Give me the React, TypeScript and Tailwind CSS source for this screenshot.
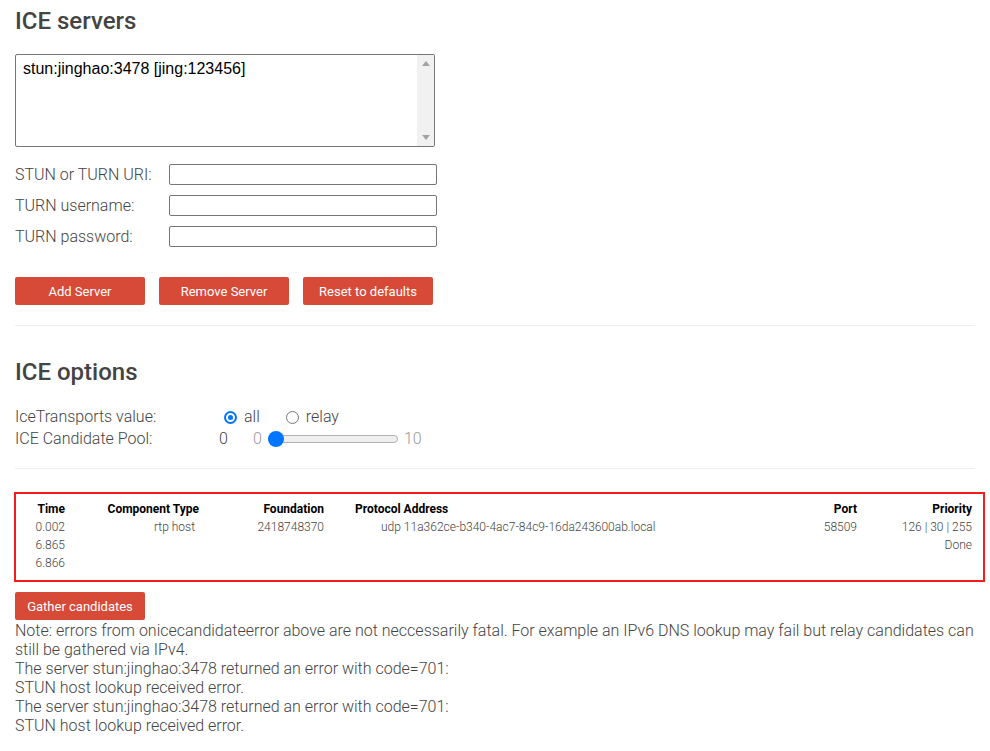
import React from "react";

const rows = [
  ["0.002", "rtp host", "2418748370", "udp 11a362ce-b340-4ac7-84c9-16da243600ab.local", "58509", "126 | 30 | 255"],
  ["6.865", "", "", "", "", "Done"],
  ["6.866", "", "", "", "", ""],
];

function Btn({ children }: { children: React.ReactNode }) {
  return (
    <button className="w-[130px] h-[28px] bg-[#d84a38] rounded-[2px] text-white text-[13px] font-normal leading-none">
      {children}
    </button>
  );
}

export default function App() {
  return (
    <div
      className="w-[990px] min-h-[751px] bg-white text-[#444] font-light text-[16px]"
      style={{ fontFamily: "Roboto, 'Liberation Sans', sans-serif" }}
    >
      <div className="w-[960px] ml-[15px]">
        <h2 className="pt-[5px] text-[24px] leading-[32px] font-medium text-[#444]">ICE servers</h2>

        <div className="mt-[17px] w-[420px] h-[93px] border border-[#767676] rounded-[2px] flex overflow-hidden">
          <div
            className="flex-1 pl-[7px] pt-[4px] text-[16px] leading-[19px] text-black font-normal"
            style={{ fontFamily: "'Liberation Sans', Arial, sans-serif" }}
          >
            stun:jinghao:3478 [jing:123456]
          </div>
          <div className="w-[17px] bg-[#f1f1f1] flex flex-col items-center justify-between py-[6px]">
            <svg width="8" height="5" viewBox="0 0 8 5"><path d="M0 5 L4 0 L8 5 Z" fill="#a3a3a3" /></svg>
            <svg width="8" height="5" viewBox="0 0 8 5"><path d="M0 0 L4 5 L8 0 Z" fill="#a3a3a3" /></svg>
          </div>
        </div>

        <div className="mt-[17px] flex flex-col gap-[10px]">
          {["STUN or TURN URI:", "TURN username:", "TURN password:"].map((l) => (
            <div key={l} className="flex items-center h-[21px]">
              <div className="w-[154px] leading-[21px] -mt-[1px]">{l}</div>
              <div className="w-[268px] h-[21px] border border-[#767676] rounded-[2px]" />
            </div>
          ))}
        </div>

        <div className="mt-[30px] flex gap-[14px]">
          <Btn>Add Server</Btn>
          <Btn>Remove Server</Btn>
          <Btn>Reset to defaults</Btn>
        </div>

        <div className="mt-[20px] h-px bg-[#eeeeee]" />

        <h2 className="mt-[30px] text-[24px] leading-[32px] font-medium text-[#444]">ICE options</h2>

        <div className="mt-[18px] flex items-center h-[22px]">
          <div className="w-[209px]">IceTransports value:</div>
          <div className="w-[13px] h-[13px] rounded-full border-2 border-[#0075ff] flex items-center justify-center">
            <div className="w-[5px] h-[5px] rounded-full bg-[#0075ff]" />
          </div>
          <div className="ml-[7px]">all</div>
          <div className="ml-[26px] w-[13px] h-[13px] rounded-full border border-[#767676]" />
          <div className="ml-[7px]">relay</div>
        </div>
        <div className="flex items-center h-[22px]">
          <div className="w-[204px]">ICE Candidate Pool:</div>
          <div className="w-[34px]">0</div>
          <div className="text-[#999]">0</div>
          <div className="ml-[6px] relative w-[130px] h-[16px] flex items-center">
            <div className="w-full h-[8px] rounded-full bg-[#efefef] border border-[#b2b2b2]" />
            <div className="absolute left-0 top-0 w-[16px] h-[16px] rounded-full bg-[#0075ff]" />
          </div>
          <div className="ml-[6px] text-[#999]">10</div>
        </div>

        <div className="mt-[18px] h-px bg-[#eeeeee]" />

        <div className="mt-[23px] -ml-[1px] w-[971px] h-[90px] border-2 border-[#f51c1c] pt-[6px] text-[12px]">
          <div className="flex h-[18px] items-center font-bold text-black">
            <div className="w-[49px] text-right">Time</div>
            <div className="w-[134px] text-right">Component Type</div>
            <div className="w-[125px] text-right">Foundation</div>
            <div className="w-[476px] pl-[31px]">Protocol Address</div>
            <div className="w-[57px] text-right">Port</div>
            <div className="w-[115px] text-right">Priority</div>
          </div>
          {rows.map((r, i) => (
            <div key={i} className="flex h-[18px] items-center font-light text-[#444]">
              <div className="w-[49px] text-right">{r[0]}</div>
              <div className="w-[134px] text-right pr-[4px]">{r[1]}</div>
              <div className="w-[125px] text-right">{r[2]}</div>
              <div className="w-[476px] pl-[57px]">{r[3]}</div>
              <div className="w-[57px] text-right">{r[4]}</div>
              <div className="w-[115px] text-right">{r[5]}</div>
            </div>
          ))}
        </div>

        <div className="mt-[10px]">
          <Btn>Gather candidates</Btn>
        </div>
        <div className="leading-[19px] mt-[1px]">
          <div>
            Note: errors from onicecandidateerror above are not neccessarily fatal. For example an IPv6 DNS lookup may fail but relay candidates can still be gathered via IPv4.
          </div>
          <div>The server stun:jinghao:3478 returned an error with code=701:</div>
          <div>STUN host lookup received error.</div>
          <div>The server stun:jinghao:3478 returned an error with code=701:</div>
          <div>STUN host lookup received error.</div>
        </div>
      </div>
    </div>
  );
}
